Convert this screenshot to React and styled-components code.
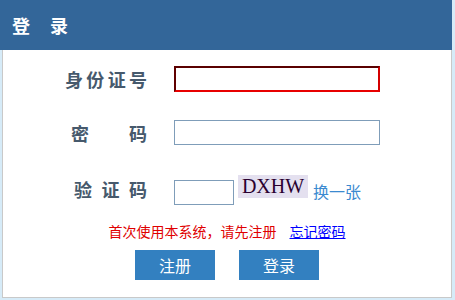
import styled, { createGlobalStyle } from "styled-components";

const GlobalStyle = createGlobalStyle`
  html, body {
    margin: 0;
    padding: 0;
    background: #d6ebf8;
    font-family: "Noto Sans CJK SC", "Noto Sans", sans-serif;
  }
`;

const Panel = styled.div`
  width: 452px;
  height: 298px;
  display: flex;
  flex-direction: column;
`;

const Header = styled.div`
  height: 50px;
  background: #336699;
  display: flex;
  align-items: center;
  padding-left: 12px;
  color: #fff;
  font-size: 18px;
  font-weight: 700;
  letter-spacing: 8px;
`;

const Body = styled.div`
  flex: 1;
  margin-left: 2px;
  background: #fff;
  border: 1px solid #c9c9c9;
  border-top: none;
  display: flex;
  flex-direction: column;
  padding-top: 16px;
`;

const Row = styled.div`
  display: flex;
  align-items: ${(p) => p.$align || "center"};
  margin-top: ${(p) => p.$top || 0}px;
  height: ${(p) => p.$h}px;
`;

const LabelCell = styled.div`
  width: 144px;
  margin-right: 27px;
  display: flex;
  justify-content: flex-end;
  align-self: ${(p) => p.$self || "auto"};
`;

const Label = styled.div`
  width: ${(p) => p.$w}px;
  display: flex;
  justify-content: space-between;
  font-size: 18px;
  font-weight: 700;
  color: #46596c;
  line-height: 24px;
`;

const Input = styled.input`
  box-sizing: border-box;
  width: ${(p) => p.$w}px;
  height: 25px;
  border: 1px solid #7f9db9;
  padding: 0 3px;
  font-size: 14px;
  outline: none;
  background: #fff;
`;

const FocusInput = styled(Input)`
  height: 26px;
  border: 2px solid;
  border-color: #5a0000 #d40000 #e80000 #600000;
  caret-color: #000;
`;

const Captcha = styled.span`
  width: 70px;
  height: 23px;
  margin-left: 4px;
  margin-bottom: 7px;
  background: #e4e0ef;
  color: #2a0030;
  font-family: "Liberation Serif", serif;
  font-size: 20px;
  line-height: 23px;
  text-align: center;
`;

const Refresh = styled.a`
  margin-left: 5px;
  margin-bottom: 3px;
  color: #3b8ad0;
  font-size: 16px;
  line-height: 22px;
  text-decoration: none;
  cursor: pointer;
`;

const Notice = styled.div`
  margin-top: 16px;
  display: flex;
  justify-content: center;
  gap: 13px;
  font-size: 14px;
  line-height: 20px;
`;

const Warn = styled.span`
  color: #e00000;
`;

const Forgot = styled.a`
  color: #0000ff;
  text-decoration: underline;
  cursor: pointer;
`;

const Buttons = styled.div`
  margin-top: 9px;
  display: flex;
  justify-content: center;
  gap: 24px;
`;

const Button = styled.button`
  width: 80px;
  height: 30px;
  border: none;
  background: #3380c0;
  color: #fff;
  font-family: inherit;
  font-size: 16px;
  cursor: pointer;
`;

const Chars = ({ text, w }) => (
  <Label $w={w}>
    {[...text].map((c, i) => (
      <span key={i}>{c}</span>
    ))}
  </Label>
);

export default function App() {
  return (
    <>
      <GlobalStyle />
      <Panel>
        <Header>登 录</Header>
        <Body>
          <Row $h={26}>
            <LabelCell>
              <Chars text="身份证号" w={82} />
            </LabelCell>
            <FocusInput $w={206} autoFocus />
          </Row>
          <Row $h={25} $top={28}>
            <LabelCell>
              <Chars text="密码" w={76} />
            </LabelCell>
            <Input $w={206} type="password" />
          </Row>
          <Row $h={32} $top={28} $align="flex-end">
            <LabelCell $self="center">
              <Chars text="验证码" w={73} />
            </LabelCell>
            <Input $w={60} />
            <Captcha>DXHW</Captcha>
            <Refresh>换一张</Refresh>
          </Row>
          <Notice>
            <Warn>首次使用本系统，请先注册</Warn>
            <Forgot>忘记密码</Forgot>
          </Notice>
          <Buttons>
            <Button>注册</Button>
            <Button>登录</Button>
          </Buttons>
        </Body>
      </Panel>
    </>
  );
}
